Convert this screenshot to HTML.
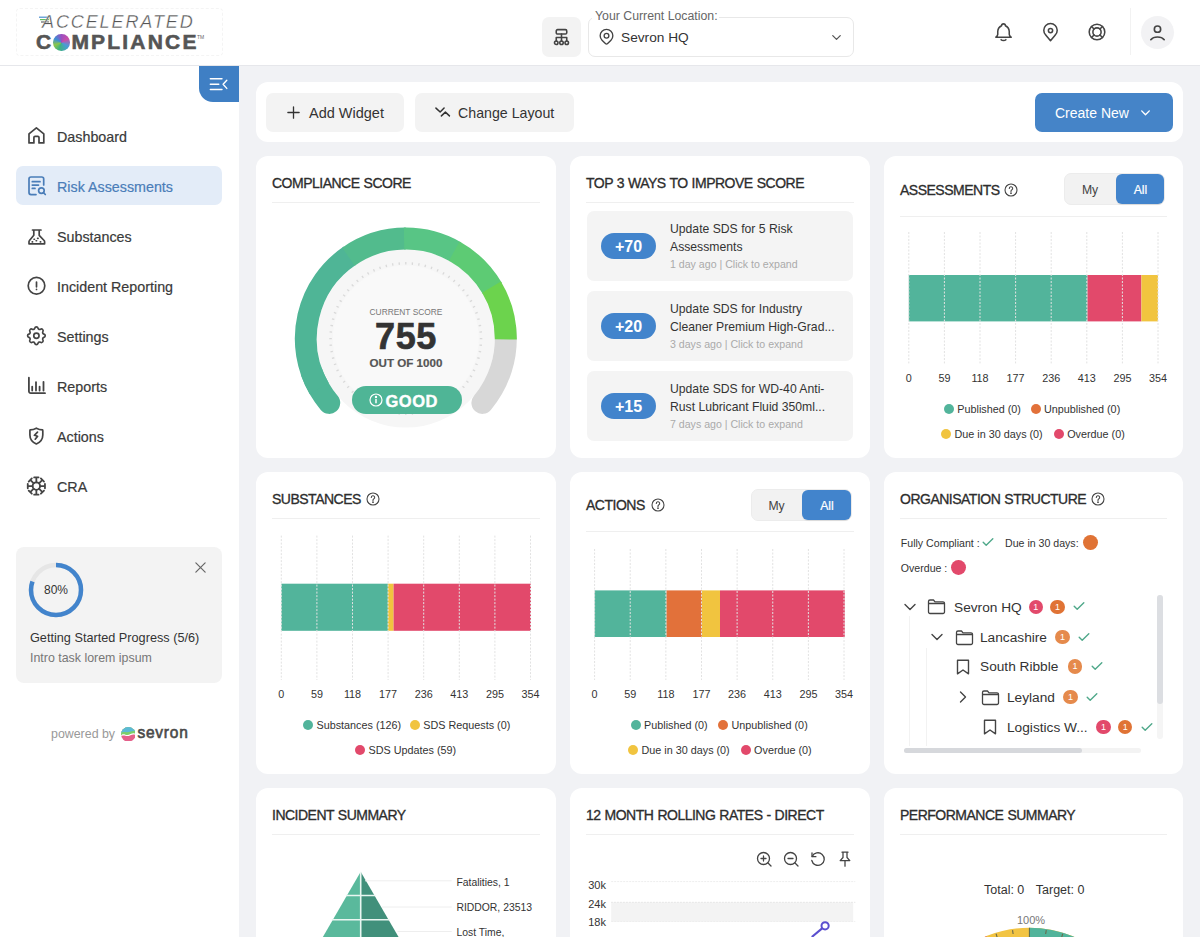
<!DOCTYPE html>
<html><head><meta charset="utf-8">
<style>
*{box-sizing:border-box;margin:0;padding:0}
html,body{width:1200px;height:937px;overflow:hidden;background:#f1f2f5;font-family:"Liberation Sans",sans-serif;color:#333}
.abs{position:absolute}
#header{position:absolute;left:0;top:0;width:1200px;height:66px;background:#fff;border-bottom:1px solid #e6e7eb}
#sidebar{position:absolute;left:0;top:66px;width:239px;height:871px;background:#fff}
.nav{position:absolute;left:16px;width:206px;height:39px;border-radius:7px}
.nav .t{position:absolute;left:41px;top:2px;line-height:39px;font-size:14.3px;color:#3a3a3a;white-space:nowrap;-webkit-text-stroke:0.2px #3a3a3a}
.nav svg{position:absolute;left:10px;top:8px}
.nav.active{background:#e3ecf8}
.nav.active .t{color:#4a7db8;-webkit-text-stroke:0.2px #4a7db8}
.card{position:absolute;background:#fff;border-radius:12px;overflow:hidden}
.ttl{position:absolute;left:16px;font-size:14px;font-weight:normal;-webkit-text-stroke:0.32px #2d2d2d;color:#2d2d2d;white-space:nowrap;letter-spacing:-0.5px;word-spacing:0.6px;line-height:17px}
.div{position:absolute;left:16px;right:16px;height:1px;background:#efefef}
.btn{position:absolute;background:#f3f3f3;border-radius:7px}
.small{font-size:11px;color:#333;white-space:nowrap}
</style></head>
<body>
<div id="header">
  <div class="abs" style="left:16px;top:8px;width:207px;height:48px;border:1px dashed #f4f4f4;border-radius:4px"></div>
  <svg class="abs" style="left:38px;top:15px" width="18" height="12" viewBox="0 0 18 12">
    <path d="M1 2.2h10" stroke="#4a8fd0" stroke-width="1.2"/>
    <path d="M2 4.6h9" stroke="#63bf5a" stroke-width="1.2"/>
    <path d="M3 7h8" stroke="#666" stroke-width="1.2"/>
  </svg>
  <div class="abs" style="left:42px;top:12px;font-size:18px;font-style:italic;color:#555;letter-spacing:1.9px;line-height:20px;-webkit-text-stroke:0.35px #fff">ACCELERATED</div>
  <div class="abs" style="left:36px;top:31px;font-size:21px;font-weight:bold;color:#555;letter-spacing:2.2px;line-height:22px;-webkit-text-stroke:0.6px #555">C<span style="display:inline-block;width:16.5px;height:16.5px;margin:0 1.5px 0 0;vertical-align:-1.5px;border-radius:50%;background:conic-gradient(from 0deg,#9b4fc0,#c94fa8 60deg,#4a9bd8 120deg,#3fb27e 200deg,#8cc64a 250deg,#3c8fd6 300deg,#9b4fc0)"></span>MPLIANCE</div>
  <div class="abs" style="left:197px;top:34px;font-size:5px;line-height:6px;color:#666">TM</div>
  <!-- org icon btn -->
  <div class="abs" style="left:542px;top:17px;width:39px;height:40px;background:#f3f3f3;border-radius:7px"></div>
  <svg class="abs" style="left:551px;top:27px" width="21" height="21" viewBox="0 0 24 24" fill="none" stroke="#444" stroke-width="1.8" stroke-linecap="round" stroke-linejoin="round">
    <rect x="6" y="3" width="12" height="5" rx="1.5"/>
    <path d="M12 8v4M6 12h12M6 12v4M12 12v4M18 12v4"/>
    <circle cx="6" cy="18" r="2"/><circle cx="12" cy="18" r="2"/><circle cx="18" cy="18" r="2"/>
  </svg>
  <!-- location select -->
  <div class="abs" style="left:588px;top:17px;width:266px;height:40px;border:1px solid #e8e8e8;border-radius:7px"></div>
  <div class="abs" style="left:592px;top:9px;padding:0 1px 0 3px;background:#fff;font-size:12.3px;color:#666;line-height:14px">Your Current Location:</div>
  <svg class="abs" style="left:597px;top:27px" width="19" height="19" viewBox="0 0 24 24" fill="none" stroke="#444" stroke-width="1.7" stroke-linecap="round" stroke-linejoin="round">
    <circle cx="12" cy="11" r="3"/>
    <path d="M17.657 16.657L13.414 20.9a2 2 0 0 1-2.827 0l-4.244-4.243a8 8 0 1 1 11.314 0z"/>
  </svg>
  <div class="abs" style="left:621px;top:30px;font-size:13.7px;color:#333;line-height:16px">Sevron HQ</div>
  <svg class="abs" style="left:829px;top:30px" width="15" height="15" viewBox="0 0 24 24" fill="none" stroke="#555" stroke-width="2" stroke-linecap="round" stroke-linejoin="round"><path d="M6 9l6 6 6-6"/></svg>
  <!-- right icons -->
  <svg class="abs" style="left:992px;top:21px" width="23" height="23" viewBox="0 0 24 24" fill="none" stroke="#444" stroke-width="1.6" stroke-linecap="round" stroke-linejoin="round">
    <path d="M10 5a2 2 0 1 1 4 0a7 7 0 0 1 4 6v3a4 4 0 0 0 2 3h-16a4 4 0 0 0 2-3v-3a7 7 0 0 1 4-6"/><path d="M9.5 19.5a3 2 0 0 0 5 0"/>
  </svg>
  <svg class="abs" style="left:1039px;top:21px" width="23" height="23" viewBox="0 0 24 24" fill="none" stroke="#444" stroke-width="1.6" stroke-linecap="round" stroke-linejoin="round">
    <circle cx="12" cy="10" r="2.2"/>
    <path d="M12 20.5l-5-6a7 7 0 1 1 10 0z"/>
  </svg>
  <svg class="abs" style="left:1086px;top:21px" width="22" height="22" viewBox="0 0 24 24" fill="none" stroke="#444" stroke-width="1.7" stroke-linecap="round" stroke-linejoin="round">
    <circle cx="12" cy="12" r="8.5"/><circle cx="12" cy="12" r="4.5"/>
    <path d="M15.2 8.8l2.8-2.8M8.8 8.8L6 6M8.8 15.2L6 18M15.2 15.2l2.8 2.8"/>
  </svg>
  <div class="abs" style="left:1130px;top:8px;width:1px;height:47px;background:#f2f2f2"></div>
  <div class="abs" style="left:1141px;top:16px;width:33px;height:33px;border-radius:50%;background:#f2f2f4"></div>
  <svg class="abs" style="left:1146px;top:21px" width="23" height="23" viewBox="0 0 24 24" fill="none" stroke="#444" stroke-width="1.7" stroke-linecap="round" stroke-linejoin="round">
    <circle cx="12" cy="8.5" r="3.3"/><path d="M5 19.5a8 5.5 0 0 1 14 0"/>
  </svg>
</div>
<div id="sidebar">
  <div class="abs" style="left:199px;top:0;width:40px;height:36px;background:#3f7fc4;border-bottom-left-radius:14px"></div>
  <svg class="abs" style="left:209px;top:10px" width="20" height="16" viewBox="0 0 20 16" fill="none" stroke="#fff" stroke-width="1.4" stroke-linecap="round" stroke-linejoin="round">
    <path d="M1.3 2.8H13M1.3 8.2H9.8M1.3 13.5H13M17.8 4.2L14.1 8.2L17.8 12.4"/>
  </svg>
  <div class="nav" style="top:50px"><svg width="22" height="22" viewBox="0 0 22 22" fill="none" stroke="#444" stroke-width="1.7" stroke-linecap="round" stroke-linejoin="round"><path d="M3 18.9V9.9L10.4 3.8L17.8 9.9V18.9H13V13.5a1.2 1.2 0 0 0-1.2-1.2H9.1a1.2 1.2 0 0 0-1.2 1.2V18.9Z"/></svg><span class="t">Dashboard</span></div>
  <div class="nav active" style="top:100px"><svg width="22" height="22" viewBox="0 0 22 22" fill="none" stroke="#4a7db8" stroke-width="1.7" stroke-linecap="round" stroke-linejoin="round"><path d="M17.7 11V5a2 2 0 0 0-2-2H5a2 2 0 0 0-2 2v13.6a2 2 0 0 0 2 2h5M6.3 7.7h7.7M6.3 11.1h6.2M6.3 14.4h2.7"/><circle cx="15.4" cy="16.6" r="2.8"/><path d="M17.5 18.7l1.8 1.8"/></svg><span class="t">Risk Assessments</span></div>
  <div class="nav" style="top:150px"><svg width="22" height="22" viewBox="0 0 22 22" fill="none" stroke="#444" stroke-width="1.7" stroke-linecap="round" stroke-linejoin="round"><path d="M6.5 6H15M7.8 6v5.3L3.5 16.5a2 2 0 0 0-.5 1.3v2h15.6v-2a2 2 0 0 0-.5-1.3L13.2 11.3V6"/><path d="M8 15.3h.5M11.6 14.4h.5M10.1 16.8h.5M6.2 17.9h.4M14.3 17.9h.4" stroke-width="1.6"/></svg><span class="t">Substances</span></div>
  <div class="nav" style="top:200px"><svg width="22" height="22" viewBox="0 0 22 22" fill="none" stroke="#444" stroke-width="1.7" stroke-linecap="round" stroke-linejoin="round"><circle cx="10.5" cy="11.75" r="8.3"/><path d="M10.5 8v4.8M10.5 15.4h.01"/></svg><span class="t">Incident Reporting</span></div>
  <div class="nav" style="top:250px"><svg width="22" height="22" viewBox="0 0 22 22" fill="none" stroke="#444" stroke-width="1.7" stroke-linecap="round" stroke-linejoin="round"><g transform="translate(10.4 11.75) scale(0.98) translate(-12 -12)"><path d="M10.325 4.317c.426-1.756 2.924-1.756 3.35 0a1.724 1.724 0 0 0 2.573 1.066c1.543-.94 3.31.826 2.37 2.37a1.724 1.724 0 0 0 1.065 2.572c1.756.426 1.756 2.924 0 3.35a1.724 1.724 0 0 0-1.066 2.573c.94 1.543-.826 3.31-2.370 2.370a1.724 1.724 0 0 0-2.572 1.065c-.426 1.756-2.924 1.756-3.35 0a1.724 1.724 0 0 0-2.573-1.066c-1.543.94-3.31-.826-2.37-2.37a1.724 1.724 0 0 0-1.065-2.572c-1.756-.426-1.756-2.924 0-3.35a1.724 1.724 0 0 0 1.066-2.573c-.94-1.543.826-3.31 2.37-2.37c1 .608 2.296.07 2.572-1.065z"/><circle cx="12" cy="12" r="2.7"/></g></svg><span class="t">Settings</span></div>
  <div class="nav" style="top:300px"><svg width="22" height="22" viewBox="0 0 22 22" fill="none" stroke="#444" stroke-width="1.8" stroke-linecap="round" stroke-linejoin="round"><path d="M2.9 3.7V17.3a1.9 1.9 0 0 0 1.9 1.9H19M6.2 12.6v3.9M10 8.1v8.4M13.6 12.6v3.9M17.5 7.8v8.7"/></svg><span class="t">Reports</span></div>
  <div class="nav" style="top:350px"><svg width="22" height="22" viewBox="0 0 22 22" fill="none" stroke="#444" stroke-width="1.7" stroke-linecap="round" stroke-linejoin="round"><path d="M10.35 4.2C8.5 5.2 6.2 5.8 4.1 5.8 3.9 6 3.9 6.4 3.9 6.8V11c0 3.9 2.6 7.3 6.45 9C14.2 18.3 16.8 14.9 16.8 11V6.8c0-.4 0-.8-.2-1-2.1 0-4.4-.6-6.25-1.6z"/><path d="M11.5 8.2L8.4 11.3 11.6 12.2 9.2 15.2"/></svg><span class="t">Actions</span></div>
  <div class="nav" style="top:400px"><svg width="22" height="22" viewBox="0 0 22 22" fill="none" stroke="#444" stroke-width="1.8" stroke-linecap="round" stroke-linejoin="round"><circle cx="10.35" cy="12.05" r="3.75"/><path d="M10.35 8.30L10.35 3.45M8.15 3.45L12.55 3.45M13.00 9.40L16.43 5.97M14.88 4.41L17.99 7.52M14.10 12.05L18.95 12.05M18.95 9.85L18.95 14.25M13.00 14.70L16.43 18.13M17.99 16.58L14.88 19.69M10.35 15.80L10.35 20.65M12.55 20.65L8.15 20.65M7.70 14.70L4.27 18.13M5.82 19.69L2.71 16.58M6.60 12.05L1.75 12.05M1.75 14.25L1.75 9.85M7.70 9.40L4.27 5.97M2.71 7.52L5.82 4.41"/></svg><span class="t">CRA</span></div>
  <div class="abs" style="left:16px;top:481px;width:206px;height:136px;background:#f3f3f3;border-radius:8px">
    <svg class="abs" style="left:12px;top:15px" width="56" height="56" viewBox="0 0 56 56">
      <circle cx="28" cy="28" r="25" fill="none" stroke="#e6e6e6" stroke-width="4.5"/>
      <circle cx="28" cy="28" r="25" fill="none" stroke="#4284cc" stroke-width="4.5" stroke-dasharray="125.66 157.08" transform="rotate(-90 28 28)"/>
    </svg>
    <div class="abs" style="left:28px;top:36px;width:24px;text-align:center;font-size:12px;color:#333;line-height:14px">80%</div>
    <svg class="abs" style="left:178px;top:14px" width="13" height="13" viewBox="0 0 14 14" fill="none" stroke="#666" stroke-width="1.3" stroke-linecap="round"><path d="M2 2l10 10M12 2L2 12"/></svg>
    <div class="abs" style="left:14px;top:84px;font-size:12.7px;color:#333;line-height:15px;white-space:nowrap">Getting Started Progress (5/6)</div>
    <div class="abs" style="left:14px;top:104px;font-size:12.4px;color:#777;line-height:15px;white-space:nowrap">Intro task lorem ipsum</div>
  </div>
  <div class="abs" style="left:51px;top:661px;font-size:12.4px;color:#999;line-height:15px">powered by</div>
  <svg class="abs" style="left:120.8px;top:660.5px" width="14.6" height="14.6" viewBox="0 0 20 20">
    <defs><clipPath id="sc"><circle cx="10" cy="10" r="10"/></clipPath></defs>
    <g clip-path="url(#sc)">
      <rect x="0" y="0" width="20" height="20" fill="#e4608a"/>
      <path d="M0 0H20V11C15 8 12 14 6 12C3 11 1 12 0 13z" fill="#ffffff"/>
      <path d="M0 0H20V9.5C15 6.5 12 12.5 6 10.5C3 9.5 1 10.5 0 11.5z" fill="#7ccf6a"/>
      <path d="M0 0H20V6C15 4 11 8 6 7C3 6.5 1 7 0 8z" fill="#5bbad6"/>
    </g>
  </svg>
  <div class="abs" style="left:137.5px;top:657px;font-size:15.5px;font-weight:normal;-webkit-text-stroke:0.6px #4a4a4a;color:#4a4a4a;line-height:19px;letter-spacing:0.75px;transform:scaleY(1.1);transform-origin:0 70%">sevron</div>

</div><div class="card" style="left:256px;top:82px;width:927px;height:60px">
  <div class="btn" style="left:10px;top:11px;width:138px;height:39px"></div>
  <svg class="abs" style="left:30px;top:23px" width="15" height="15" viewBox="0 0 16 16" fill="none" stroke="#333" stroke-width="1.4" stroke-linecap="round"><path d="M8 2v12M2 8h12"/></svg>
  <div class="abs" style="left:53px;top:23px;font-size:14.5px;color:#333;line-height:17px">Add Widget</div>
  <div class="btn" style="left:159px;top:11px;width:159px;height:39px"></div>
  <svg class="abs" style="left:178px;top:23px" width="17" height="15" viewBox="0 0 18 16" fill="none" stroke="#333" stroke-width="1.6" stroke-linecap="round" stroke-linejoin="round"><path d="M2 3.3L6.5 7.5L10.7 3.3M7.8 11.6L12.1 7.6L16.4 11.6"/></svg>
  <div class="abs" style="left:202px;top:23px;font-size:14.2px;color:#333;line-height:17px">Change Layout</div>
  <div class="abs" style="left:779px;top:11px;width:138px;height:39px;background:#4584c8;border-radius:7px"></div>
  <div class="abs" style="left:799px;top:23px;font-size:14px;color:#fff;line-height:17px">Create New</div>
  <svg class="abs" style="left:883px;top:24px" width="13" height="13" viewBox="0 0 24 24" fill="none" stroke="#fff" stroke-width="2.6" stroke-linecap="round" stroke-linejoin="round"><path d="M5 9l7 7 7-7"/></svg>
</div>
<div class="card" style="left:256px;top:156px;width:300px;height:302px">
<div class="ttl" style="top:19px">COMPLIANCE SCORE</div><div class="div" style="top:46px"></div>
<svg class="abs" style="left:0;top:0" width="300" height="302">
<circle cx="149.8" cy="182.6" r="89" fill="#f6f6f6"/>
<circle cx="149.8" cy="182.6" r="73" fill="#f9f9f9"/>
<path d="M249.42 173.88A100 100 0 0 1 226.40 246.88" stroke="#d7d7d7" stroke-width="22" fill="none" stroke-linecap="round"/>
<path d="M73.20 246.88A100 100 0 0 1 55.83 216.80" stroke="#4fb596" stroke-width="22" fill="none" stroke-linecap="round"/>
<path d="M63.20 232.60A100 100 0 0 1 93.88 99.70" stroke="#4fb596" stroke-width="22" fill="none" stroke-linecap="butt"/>
<path d="M92.44 100.68A100 100 0 0 1 149.80 82.60" stroke="#52bb8d" stroke-width="22" fill="none" stroke-linecap="butt"/>
<path d="M148.05 82.62A100 100 0 0 1 199.80 96.00" stroke="#58c585" stroke-width="22" fill="none" stroke-linecap="butt"/>
<path d="M198.28 95.14A100 100 0 0 1 236.40 132.60" stroke="#5dcb74" stroke-width="22" fill="none" stroke-linecap="butt"/>
<path d="M235.52 131.10A100 100 0 0 1 249.80 183.47" stroke="#6cd34d" stroke-width="22" fill="none" stroke-linecap="butt"/>
<line x1="226.30" y1="182.60" x2="223.80" y2="182.60" stroke="#d9d9d9" stroke-width="1.3"/>
<line x1="226.01" y1="189.27" x2="223.52" y2="189.05" stroke="#d9d9d9" stroke-width="1.3"/>
<line x1="225.14" y1="195.88" x2="222.68" y2="195.45" stroke="#d9d9d9" stroke-width="1.3"/>
<line x1="223.69" y1="202.40" x2="221.28" y2="201.75" stroke="#d9d9d9" stroke-width="1.3"/>
<line x1="221.69" y1="208.76" x2="219.34" y2="207.91" stroke="#d9d9d9" stroke-width="1.3"/>
<line x1="219.13" y1="214.93" x2="216.87" y2="213.87" stroke="#d9d9d9" stroke-width="1.3"/>
<line x1="216.05" y1="220.85" x2="213.89" y2="219.60" stroke="#d9d9d9" stroke-width="1.3"/>
<line x1="212.47" y1="226.48" x2="210.42" y2="225.04" stroke="#d9d9d9" stroke-width="1.3"/>
<line x1="208.40" y1="231.77" x2="206.49" y2="230.17" stroke="#d9d9d9" stroke-width="1.3"/>
<line x1="203.89" y1="236.69" x2="202.13" y2="234.93" stroke="#d9d9d9" stroke-width="1.3"/>
<line x1="198.97" y1="241.20" x2="197.37" y2="239.29" stroke="#d9d9d9" stroke-width="1.3"/>
<line x1="193.68" y1="245.27" x2="192.24" y2="243.22" stroke="#d9d9d9" stroke-width="1.3"/>
<line x1="188.05" y1="248.85" x2="186.80" y2="246.69" stroke="#d9d9d9" stroke-width="1.3"/>
<line x1="182.13" y1="251.93" x2="181.07" y2="249.67" stroke="#d9d9d9" stroke-width="1.3"/>
<line x1="175.96" y1="254.49" x2="175.11" y2="252.14" stroke="#d9d9d9" stroke-width="1.3"/>
<line x1="169.60" y1="256.49" x2="168.95" y2="254.08" stroke="#d9d9d9" stroke-width="1.3"/>
<line x1="163.08" y1="257.94" x2="162.65" y2="255.48" stroke="#d9d9d9" stroke-width="1.3"/>
<line x1="156.47" y1="258.81" x2="156.25" y2="256.32" stroke="#d9d9d9" stroke-width="1.3"/>
<line x1="149.80" y1="259.10" x2="149.80" y2="256.60" stroke="#d9d9d9" stroke-width="1.3"/>
<line x1="143.13" y1="258.81" x2="143.35" y2="256.32" stroke="#d9d9d9" stroke-width="1.3"/>
<line x1="136.52" y1="257.94" x2="136.95" y2="255.48" stroke="#d9d9d9" stroke-width="1.3"/>
<line x1="130.00" y1="256.49" x2="130.65" y2="254.08" stroke="#d9d9d9" stroke-width="1.3"/>
<line x1="123.64" y1="254.49" x2="124.49" y2="252.14" stroke="#d9d9d9" stroke-width="1.3"/>
<line x1="117.47" y1="251.93" x2="118.53" y2="249.67" stroke="#d9d9d9" stroke-width="1.3"/>
<line x1="111.55" y1="248.85" x2="112.80" y2="246.69" stroke="#d9d9d9" stroke-width="1.3"/>
<line x1="105.92" y1="245.27" x2="107.36" y2="243.22" stroke="#d9d9d9" stroke-width="1.3"/>
<line x1="100.63" y1="241.20" x2="102.23" y2="239.29" stroke="#d9d9d9" stroke-width="1.3"/>
<line x1="95.71" y1="236.69" x2="97.47" y2="234.93" stroke="#d9d9d9" stroke-width="1.3"/>
<line x1="91.20" y1="231.77" x2="93.11" y2="230.17" stroke="#d9d9d9" stroke-width="1.3"/>
<line x1="87.13" y1="226.48" x2="89.18" y2="225.04" stroke="#d9d9d9" stroke-width="1.3"/>
<line x1="83.55" y1="220.85" x2="85.71" y2="219.60" stroke="#d9d9d9" stroke-width="1.3"/>
<line x1="80.47" y1="214.93" x2="82.73" y2="213.87" stroke="#d9d9d9" stroke-width="1.3"/>
<line x1="77.91" y1="208.76" x2="80.26" y2="207.91" stroke="#d9d9d9" stroke-width="1.3"/>
<line x1="75.91" y1="202.40" x2="78.32" y2="201.75" stroke="#d9d9d9" stroke-width="1.3"/>
<line x1="74.46" y1="195.88" x2="76.92" y2="195.45" stroke="#d9d9d9" stroke-width="1.3"/>
<line x1="73.59" y1="189.27" x2="76.08" y2="189.05" stroke="#d9d9d9" stroke-width="1.3"/>
<line x1="73.30" y1="182.60" x2="75.80" y2="182.60" stroke="#d9d9d9" stroke-width="1.3"/>
<line x1="73.59" y1="175.93" x2="76.08" y2="176.15" stroke="#d9d9d9" stroke-width="1.3"/>
<line x1="74.46" y1="169.32" x2="76.92" y2="169.75" stroke="#d9d9d9" stroke-width="1.3"/>
<line x1="75.91" y1="162.80" x2="78.32" y2="163.45" stroke="#d9d9d9" stroke-width="1.3"/>
<line x1="77.91" y1="156.44" x2="80.26" y2="157.29" stroke="#d9d9d9" stroke-width="1.3"/>
<line x1="80.47" y1="150.27" x2="82.73" y2="151.33" stroke="#d9d9d9" stroke-width="1.3"/>
<line x1="83.55" y1="144.35" x2="85.71" y2="145.60" stroke="#d9d9d9" stroke-width="1.3"/>
<line x1="87.13" y1="138.72" x2="89.18" y2="140.16" stroke="#d9d9d9" stroke-width="1.3"/>
<line x1="91.20" y1="133.43" x2="93.11" y2="135.03" stroke="#d9d9d9" stroke-width="1.3"/>
<line x1="95.71" y1="128.51" x2="97.47" y2="130.27" stroke="#d9d9d9" stroke-width="1.3"/>
<line x1="100.63" y1="124.00" x2="102.23" y2="125.91" stroke="#d9d9d9" stroke-width="1.3"/>
<line x1="105.92" y1="119.93" x2="107.36" y2="121.98" stroke="#d9d9d9" stroke-width="1.3"/>
<line x1="111.55" y1="116.35" x2="112.80" y2="118.51" stroke="#d9d9d9" stroke-width="1.3"/>
<line x1="117.47" y1="113.27" x2="118.53" y2="115.53" stroke="#d9d9d9" stroke-width="1.3"/>
<line x1="123.64" y1="110.71" x2="124.49" y2="113.06" stroke="#d9d9d9" stroke-width="1.3"/>
<line x1="130.00" y1="108.71" x2="130.65" y2="111.12" stroke="#d9d9d9" stroke-width="1.3"/>
<line x1="136.52" y1="107.26" x2="136.95" y2="109.72" stroke="#d9d9d9" stroke-width="1.3"/>
<line x1="143.13" y1="106.39" x2="143.35" y2="108.88" stroke="#d9d9d9" stroke-width="1.3"/>
<line x1="149.80" y1="106.10" x2="149.80" y2="108.60" stroke="#d9d9d9" stroke-width="1.3"/>
<line x1="156.47" y1="106.39" x2="156.25" y2="108.88" stroke="#d9d9d9" stroke-width="1.3"/>
<line x1="163.08" y1="107.26" x2="162.65" y2="109.72" stroke="#d9d9d9" stroke-width="1.3"/>
<line x1="169.60" y1="108.71" x2="168.95" y2="111.12" stroke="#d9d9d9" stroke-width="1.3"/>
<line x1="175.96" y1="110.71" x2="175.11" y2="113.06" stroke="#d9d9d9" stroke-width="1.3"/>
<line x1="182.13" y1="113.27" x2="181.07" y2="115.53" stroke="#d9d9d9" stroke-width="1.3"/>
<line x1="188.05" y1="116.35" x2="186.80" y2="118.51" stroke="#d9d9d9" stroke-width="1.3"/>
<line x1="193.68" y1="119.93" x2="192.24" y2="121.98" stroke="#d9d9d9" stroke-width="1.3"/>
<line x1="198.97" y1="124.00" x2="197.37" y2="125.91" stroke="#d9d9d9" stroke-width="1.3"/>
<line x1="203.89" y1="128.51" x2="202.13" y2="130.27" stroke="#d9d9d9" stroke-width="1.3"/>
<line x1="208.40" y1="133.43" x2="206.49" y2="135.03" stroke="#d9d9d9" stroke-width="1.3"/>
<line x1="212.47" y1="138.72" x2="210.42" y2="140.16" stroke="#d9d9d9" stroke-width="1.3"/>
<line x1="216.05" y1="144.35" x2="213.89" y2="145.60" stroke="#d9d9d9" stroke-width="1.3"/>
<line x1="219.13" y1="150.27" x2="216.87" y2="151.33" stroke="#d9d9d9" stroke-width="1.3"/>
<line x1="221.69" y1="156.44" x2="219.34" y2="157.29" stroke="#d9d9d9" stroke-width="1.3"/>
<line x1="223.69" y1="162.80" x2="221.28" y2="163.45" stroke="#d9d9d9" stroke-width="1.3"/>
<line x1="225.14" y1="169.32" x2="222.68" y2="169.75" stroke="#d9d9d9" stroke-width="1.3"/>
<line x1="226.01" y1="175.93" x2="223.52" y2="176.15" stroke="#d9d9d9" stroke-width="1.3"/>
</svg>

<div class="abs" style="left:100px;top:151px;width:100px;text-align:center;font-size:8.4px;line-height:10px;color:#777">CURRENT SCORE</div>
<div class="abs" style="left:90px;top:163px;width:120px;text-align:center;font-size:36px;font-weight:bold;line-height:36px;color:#333;letter-spacing:0.6px;-webkit-text-stroke:0.7px #333">755</div>
<div class="abs" style="left:90px;top:200px;width:120px;text-align:center;font-size:11.6px;font-weight:bold;line-height:14px;color:#555;-webkit-text-stroke:0.2px #555">OUT OF 1000</div>
<div class="abs" style="left:96px;top:230px;width:110px;height:28px;border-radius:14px;background:#4fb596"></div>
<svg class="abs" style="left:113px;top:237px" width="14" height="14" viewBox="0 0 14 14" fill="none" stroke="#fff" stroke-width="1.2"><circle cx="7" cy="7" r="6"/><path d="M7 6v4.2" stroke-width="1.5"/><circle cx="7" cy="4" r="0.6" fill="#fff"/></svg>
<div class="abs" style="left:129.5px;top:236px;font-size:16.5px;font-weight:bold;line-height:18px;color:#fff;letter-spacing:0.5px;-webkit-text-stroke:0.4px #fff">GOOD</div>
</div>
<div class="card" style="left:570px;top:156px;width:300px;height:302px">
<div class="ttl" style="top:19px">TOP 3 WAYS TO IMPROVE SCORE</div><div class="div" style="top:46px"></div>
<div class="abs" style="left:17px;top:55px;width:266px;height:70px;background:#f4f4f4;border-radius:7px"><div class="abs" style="left:14px;top:22px;width:55px;height:26px;border-radius:13px;background:#4284cc;color:#fff;font-weight:bold;font-size:16px;line-height:28.5px;text-align:center">+70</div><div class="abs" style="left:83px;top:9px;font-size:12.2px;line-height:18.3px;color:#333;white-space:nowrap">Update SDS for 5 Risk<br>Assessments</div><div class="abs" style="left:83px;top:46px;font-size:10.6px;line-height:14px;color:#aaa;white-space:nowrap">1 day ago | Click to expand</div></div>
<div class="abs" style="left:17px;top:135px;width:266px;height:70px;background:#f4f4f4;border-radius:7px"><div class="abs" style="left:14px;top:22px;width:55px;height:26px;border-radius:13px;background:#4284cc;color:#fff;font-weight:bold;font-size:16px;line-height:28.5px;text-align:center">+20</div><div class="abs" style="left:83px;top:9px;font-size:12.2px;line-height:18.3px;color:#333;white-space:nowrap">Update SDS for Industry<br>Cleaner Premium High-Grad...</div><div class="abs" style="left:83px;top:46px;font-size:10.6px;line-height:14px;color:#aaa;white-space:nowrap">3 days ago | Click to expand</div></div>
<div class="abs" style="left:17px;top:215px;width:266px;height:70px;background:#f4f4f4;border-radius:7px"><div class="abs" style="left:14px;top:22px;width:55px;height:26px;border-radius:13px;background:#4284cc;color:#fff;font-weight:bold;font-size:16px;line-height:28.5px;text-align:center">+15</div><div class="abs" style="left:83px;top:9px;font-size:12.2px;line-height:18.3px;color:#333;white-space:nowrap">Update SDS for WD-40 Anti-<br>Rust Lubricant Fluid 350ml...</div><div class="abs" style="left:83px;top:46px;font-size:10.6px;line-height:14px;color:#aaa;white-space:nowrap">7 days ago | Click to expand</div></div>
</div>
<div class="card" style="left:884px;top:156px;width:299px;height:302px">
<div class="ttl" style="top:26px">ASSESSMENTS</div><svg class="abs" style="left:120px;top:27px" width="14" height="14" viewBox="0 0 14 14" fill="none" stroke="#444" stroke-width="1.1" stroke-linecap="round"><circle cx="7" cy="7" r="6"/><path d="M5.3 5.5a1.7 1.7 0 1 1 2.4 1.5c-.5.25-.7.6-.7 1.1v.3"/><circle cx="7" cy="10.2" r="0.35" fill="#444"/></svg><div class="div" style="top:60px"></div>
<div class="abs" style="left:180px;top:17px;width:101px;height:32px;background:#f2f2f2;border-radius:7px;border:1px solid #ececec"></div><div class="abs" style="left:232px;top:18px;width:48px;height:30px;background:#4284cc;border-radius:6px;box-shadow:0 1px 1px rgba(0,0,0,0.08)"></div><div class="abs" style="left:180px;top:17px;width:52px;height:32px;line-height:34px;text-align:center;font-size:12.2px;color:#444">My</div><div class="abs" style="left:232px;top:17px;width:49px;height:32px;line-height:34px;text-align:center;font-size:12.2px;color:#fff;-webkit-text-stroke:0.2px #fff">All</div>
<svg class="abs" style="left:0;top:0" width="300" height="302"><rect x="24.80" y="119" width="178.70" height="46.400000000000006" fill="#52b49b"/><rect x="203.50" y="119" width="53.90" height="46.400000000000006" fill="#e2496b"/><rect x="257.40" y="119" width="16.60" height="46.400000000000006" fill="#f1c43f"/><line x1="24.80" y1="76" x2="24.80" y2="207.4" stroke="#e2e2e2" stroke-width="1" stroke-dasharray="2 1.5"/><line x1="60.40" y1="76" x2="60.40" y2="207.4" stroke="#e2e2e2" stroke-width="1" stroke-dasharray="2 1.5"/><line x1="96.00" y1="76" x2="96.00" y2="207.4" stroke="#e2e2e2" stroke-width="1" stroke-dasharray="2 1.5"/><line x1="131.60" y1="76" x2="131.60" y2="207.4" stroke="#e2e2e2" stroke-width="1" stroke-dasharray="2 1.5"/><line x1="167.20" y1="76" x2="167.20" y2="207.4" stroke="#e2e2e2" stroke-width="1" stroke-dasharray="2 1.5"/><line x1="202.80" y1="76" x2="202.80" y2="207.4" stroke="#e2e2e2" stroke-width="1" stroke-dasharray="2 1.5"/><line x1="238.40" y1="76" x2="238.40" y2="207.4" stroke="#e2e2e2" stroke-width="1" stroke-dasharray="2 1.5"/><line x1="274.00" y1="76" x2="274.00" y2="207.4" stroke="#e2e2e2" stroke-width="1" stroke-dasharray="2 1.5"/></svg><div class="abs" style="left:4.8px;top:215.3px;width:40px;text-align:center;font-size:10.8px;line-height:14px;color:#333">0</div><div class="abs" style="left:40.4px;top:215.3px;width:40px;text-align:center;font-size:10.8px;line-height:14px;color:#333">59</div><div class="abs" style="left:76.0px;top:215.3px;width:40px;text-align:center;font-size:10.8px;line-height:14px;color:#333">118</div><div class="abs" style="left:111.6px;top:215.3px;width:40px;text-align:center;font-size:10.8px;line-height:14px;color:#333">177</div><div class="abs" style="left:147.2px;top:215.3px;width:40px;text-align:center;font-size:10.8px;line-height:14px;color:#333">236</div><div class="abs" style="left:182.8px;top:215.3px;width:40px;text-align:center;font-size:10.8px;line-height:14px;color:#333">413</div><div class="abs" style="left:218.4px;top:215.3px;width:40px;text-align:center;font-size:10.8px;line-height:14px;color:#333">295</div><div class="abs" style="left:254.0px;top:215.3px;width:40px;text-align:center;font-size:10.8px;line-height:14px;color:#333">354</div>
<div class="abs" style="left:59.8px;top:248px;width:10px;height:10px;border-radius:50%;background:#52b49b"></div><div class="abs" style="left:73.3px;top:246px;font-size:10.8px;line-height:14px;color:#333;white-space:nowrap">Published (0)</div><div class="abs" style="left:146.5px;top:248px;width:10px;height:10px;border-radius:50%;background:#e2713a"></div><div class="abs" style="left:160.0px;top:246px;font-size:10.8px;line-height:14px;color:#333;white-space:nowrap">Unpublished (0)</div>
<div class="abs" style="left:57px;top:273px;width:10px;height:10px;border-radius:50%;background:#f1c43f"></div><div class="abs" style="left:70.5px;top:271px;font-size:10.8px;line-height:14px;color:#333;white-space:nowrap">Due in 30 days (0)</div><div class="abs" style="left:169.7px;top:273px;width:10px;height:10px;border-radius:50%;background:#e2496b"></div><div class="abs" style="left:183.2px;top:271px;font-size:10.8px;line-height:14px;color:#333;white-space:nowrap">Overdue (0)</div>
</div>
<div class="card" style="left:256px;top:472px;width:300px;height:302px">
<div class="ttl" style="top:19px">SUBSTANCES</div><svg class="abs" style="left:110px;top:20px" width="14" height="14" viewBox="0 0 14 14" fill="none" stroke="#444" stroke-width="1.1" stroke-linecap="round"><circle cx="7" cy="7" r="6"/><path d="M5.3 5.5a1.7 1.7 0 1 1 2.4 1.5c-.5.25-.7.6-.7 1.1v.3"/><circle cx="7" cy="10.2" r="0.35" fill="#444"/></svg><div class="div" style="top:46px"></div>
<svg class="abs" style="left:0;top:0" width="300" height="302"><rect x="25.30" y="111.7" width="106.60" height="47.10000000000001" fill="#52b49b"/><rect x="131.90" y="111.7" width="5.70" height="47.10000000000001" fill="#f1c43f"/><rect x="137.60" y="111.7" width="137.40" height="47.10000000000001" fill="#e2496b"/><line x1="25.30" y1="63.6" x2="25.30" y2="208" stroke="#e2e2e2" stroke-width="1" stroke-dasharray="2 1.5"/><line x1="60.90" y1="63.6" x2="60.90" y2="208" stroke="#e2e2e2" stroke-width="1" stroke-dasharray="2 1.5"/><line x1="96.50" y1="63.6" x2="96.50" y2="208" stroke="#e2e2e2" stroke-width="1" stroke-dasharray="2 1.5"/><line x1="132.10" y1="63.6" x2="132.10" y2="208" stroke="#e2e2e2" stroke-width="1" stroke-dasharray="2 1.5"/><line x1="167.70" y1="63.6" x2="167.70" y2="208" stroke="#e2e2e2" stroke-width="1" stroke-dasharray="2 1.5"/><line x1="203.30" y1="63.6" x2="203.30" y2="208" stroke="#e2e2e2" stroke-width="1" stroke-dasharray="2 1.5"/><line x1="238.90" y1="63.6" x2="238.90" y2="208" stroke="#e2e2e2" stroke-width="1" stroke-dasharray="2 1.5"/><line x1="274.50" y1="63.6" x2="274.50" y2="208" stroke="#e2e2e2" stroke-width="1" stroke-dasharray="2 1.5"/></svg><div class="abs" style="left:5.3px;top:214.6px;width:40px;text-align:center;font-size:10.8px;line-height:14px;color:#333">0</div><div class="abs" style="left:40.9px;top:214.6px;width:40px;text-align:center;font-size:10.8px;line-height:14px;color:#333">59</div><div class="abs" style="left:76.5px;top:214.6px;width:40px;text-align:center;font-size:10.8px;line-height:14px;color:#333">118</div><div class="abs" style="left:112.1px;top:214.6px;width:40px;text-align:center;font-size:10.8px;line-height:14px;color:#333">177</div><div class="abs" style="left:147.7px;top:214.6px;width:40px;text-align:center;font-size:10.8px;line-height:14px;color:#333">236</div><div class="abs" style="left:183.3px;top:214.6px;width:40px;text-align:center;font-size:10.8px;line-height:14px;color:#333">413</div><div class="abs" style="left:218.9px;top:214.6px;width:40px;text-align:center;font-size:10.8px;line-height:14px;color:#333">295</div><div class="abs" style="left:254.5px;top:214.6px;width:40px;text-align:center;font-size:10.8px;line-height:14px;color:#333">354</div>
<div class="abs" style="left:47px;top:248px;width:10px;height:10px;border-radius:50%;background:#52b49b"></div><div class="abs" style="left:60.5px;top:246px;font-size:10.8px;line-height:14px;color:#333;white-space:nowrap">Substances (126)</div><div class="abs" style="left:153.8px;top:248px;width:10px;height:10px;border-radius:50%;background:#f1c43f"></div><div class="abs" style="left:167.3px;top:246px;font-size:10.8px;line-height:14px;color:#333;white-space:nowrap">SDS Requests (0)</div>
<div class="abs" style="left:99px;top:273px;width:10px;height:10px;border-radius:50%;background:#e2496b"></div><div class="abs" style="left:112.5px;top:271px;font-size:10.8px;line-height:14px;color:#333;white-space:nowrap">SDS Updates (59)</div>
</div>
<div class="card" style="left:570px;top:472px;width:300px;height:302px">
<div class="ttl" style="top:25px">ACTIONS</div><svg class="abs" style="left:81px;top:26px" width="14" height="14" viewBox="0 0 14 14" fill="none" stroke="#444" stroke-width="1.1" stroke-linecap="round"><circle cx="7" cy="7" r="6"/><path d="M5.3 5.5a1.7 1.7 0 1 1 2.4 1.5c-.5.25-.7.6-.7 1.1v.3"/><circle cx="7" cy="10.2" r="0.35" fill="#444"/></svg><div class="div" style="top:59px"></div>
<div class="abs" style="left:181px;top:17px;width:101px;height:32px;background:#f2f2f2;border-radius:7px;border:1px solid #ececec"></div><div class="abs" style="left:232px;top:18px;width:49px;height:30px;background:#4284cc;border-radius:6px;box-shadow:0 1px 1px rgba(0,0,0,0.08)"></div><div class="abs" style="left:181px;top:17px;width:51px;height:32px;line-height:34px;text-align:center;font-size:12.2px;color:#444">My</div><div class="abs" style="left:232px;top:17px;width:50px;height:32px;line-height:34px;text-align:center;font-size:12.2px;color:#fff;-webkit-text-stroke:0.2px #fff">All</div>
<svg class="abs" style="left:0;top:0" width="300" height="302"><rect x="24.60" y="118.4" width="71.90" height="46.599999999999994" fill="#52b49b"/><rect x="96.50" y="118.4" width="35.40" height="46.599999999999994" fill="#e2713a"/><rect x="131.90" y="118.4" width="18.10" height="46.599999999999994" fill="#f1c43f"/><rect x="150.00" y="118.4" width="124.80" height="46.599999999999994" fill="#e2496b"/><line x1="24.60" y1="77" x2="24.60" y2="208" stroke="#e2e2e2" stroke-width="1" stroke-dasharray="2 1.5"/><line x1="60.23" y1="77" x2="60.23" y2="208" stroke="#e2e2e2" stroke-width="1" stroke-dasharray="2 1.5"/><line x1="95.86" y1="77" x2="95.86" y2="208" stroke="#e2e2e2" stroke-width="1" stroke-dasharray="2 1.5"/><line x1="131.49" y1="77" x2="131.49" y2="208" stroke="#e2e2e2" stroke-width="1" stroke-dasharray="2 1.5"/><line x1="167.12" y1="77" x2="167.12" y2="208" stroke="#e2e2e2" stroke-width="1" stroke-dasharray="2 1.5"/><line x1="202.75" y1="77" x2="202.75" y2="208" stroke="#e2e2e2" stroke-width="1" stroke-dasharray="2 1.5"/><line x1="238.38" y1="77" x2="238.38" y2="208" stroke="#e2e2e2" stroke-width="1" stroke-dasharray="2 1.5"/><line x1="274.01" y1="77" x2="274.01" y2="208" stroke="#e2e2e2" stroke-width="1" stroke-dasharray="2 1.5"/></svg><div class="abs" style="left:4.6px;top:214.6px;width:40px;text-align:center;font-size:10.8px;line-height:14px;color:#333">0</div><div class="abs" style="left:40.2px;top:214.6px;width:40px;text-align:center;font-size:10.8px;line-height:14px;color:#333">59</div><div class="abs" style="left:75.9px;top:214.6px;width:40px;text-align:center;font-size:10.8px;line-height:14px;color:#333">118</div><div class="abs" style="left:111.5px;top:214.6px;width:40px;text-align:center;font-size:10.8px;line-height:14px;color:#333">177</div><div class="abs" style="left:147.1px;top:214.6px;width:40px;text-align:center;font-size:10.8px;line-height:14px;color:#333">236</div><div class="abs" style="left:182.8px;top:214.6px;width:40px;text-align:center;font-size:10.8px;line-height:14px;color:#333">413</div><div class="abs" style="left:218.4px;top:214.6px;width:40px;text-align:center;font-size:10.8px;line-height:14px;color:#333">295</div><div class="abs" style="left:254.0px;top:214.6px;width:40px;text-align:center;font-size:10.8px;line-height:14px;color:#333">354</div>
<div class="abs" style="left:60.599999999999994px;top:248px;width:10px;height:10px;border-radius:50%;background:#52b49b"></div><div class="abs" style="left:74.1px;top:246px;font-size:10.8px;line-height:14px;color:#333;white-space:nowrap">Published (0)</div><div class="abs" style="left:148px;top:248px;width:10px;height:10px;border-radius:50%;background:#e2713a"></div><div class="abs" style="left:161.5px;top:246px;font-size:10.8px;line-height:14px;color:#333;white-space:nowrap">Unpublished (0)</div>
<div class="abs" style="left:58px;top:273px;width:10px;height:10px;border-radius:50%;background:#f1c43f"></div><div class="abs" style="left:71.5px;top:271px;font-size:10.8px;line-height:14px;color:#333;white-space:nowrap">Due in 30 days (0)</div><div class="abs" style="left:170.6px;top:273px;width:10px;height:10px;border-radius:50%;background:#e2496b"></div><div class="abs" style="left:184.1px;top:271px;font-size:10.8px;line-height:14px;color:#333;white-space:nowrap">Overdue (0)</div>
</div>
<div class="card" style="left:884px;top:472px;width:299px;height:302px">
<div class="ttl" style="top:19px">ORGANISATION STRUCTURE</div><svg class="abs" style="left:206.5px;top:20px" width="14" height="14" viewBox="0 0 14 14" fill="none" stroke="#444" stroke-width="1.1" stroke-linecap="round"><circle cx="7" cy="7" r="6"/><path d="M5.3 5.5a1.7 1.7 0 1 1 2.4 1.5c-.5.25-.7.6-.7 1.1v.3"/><circle cx="7" cy="10.2" r="0.35" fill="#444"/></svg><div class="div" style="top:46px"></div>
<div class="abs" style="left:16.8px;top:63.7px;font-size:10.6px;line-height:14px;color:#333">Fully Compliant :</div><svg class="abs" style="left:98px;top:65.3px" width="12" height="10" viewBox="0 0 12 10" fill="none" stroke="#4fa88a" stroke-width="1.4" stroke-linecap="round" stroke-linejoin="round"><path d="M1.2 5.2l3 3L10.8 1.8"/></svg>
<div class="abs" style="left:121px;top:63.7px;font-size:10.6px;line-height:14px;color:#333">Due in 30 days:</div><div class="abs" style="left:199.4px;top:62.9px;width:14.8px;height:14.8px;border-radius:50%;background:#e07335"></div>
<div class="abs" style="left:16.8px;top:89px;font-size:10.6px;line-height:14px;color:#333">Overdue :</div><div class="abs" style="left:66.9px;top:88.2px;width:14.8px;height:14.8px;border-radius:50%;background:#e2496b"></div>
<div class="abs" style="left:25px;top:144px;width:1px;height:130px;background:#f2f2f2"></div>
<div class="abs" style="left:42px;top:176px;width:1px;height:98px;background:#f2f2f2"></div>
<svg class="abs" style="left:19.6px;top:130.8px" width="12" height="8" viewBox="0 0 12 8" fill="none" stroke="#444" stroke-width="1.4" stroke-linecap="round" stroke-linejoin="round"><path d="M1 1.5l5 5 5-5"/></svg><svg class="abs" style="left:43px;top:126.30000000000001px" width="19" height="17" viewBox="0 0 19 17" fill="none" stroke="#444" stroke-width="1.3" stroke-linejoin="round"><path d="M1.5 3.5a1.5 1.5 0 0 1 1.5-1.5h3.5l1.5 1.8h8a1.5 1.5 0 0 1 1.5 1.5v8.7a1.5 1.5 0 0 1-1.5 1.5H3a1.5 1.5 0 0 1-1.5-1.5z"/><path d="M1.5 5.5h16"/></svg><div class="abs" style="left:70px;top:127.50000000000001px;font-size:13.7px;line-height:16px;color:#333;white-space:nowrap">Sevron HQ</div><div class="abs" style="left:144.55px;top:127.55000000000001px;width:14.5px;height:14.5px;border-radius:50%;background:#e2496b;color:#fff;font-size:9px;line-height:14.5px;text-align:center">1</div><div class="abs" style="left:166.25px;top:127.55000000000001px;width:14.5px;height:14.5px;border-radius:50%;background:#e07335;color:#fff;font-size:9px;line-height:14.5px;text-align:center">1</div><svg class="abs" style="left:189.3px;top:129.3px" width="12" height="10" viewBox="0 0 12 10" fill="none" stroke="#4fa88a" stroke-width="1.4" stroke-linecap="round" stroke-linejoin="round"><path d="M1.2 5.2l3 3L10.8 1.8"/></svg>
<svg class="abs" style="left:47px;top:161px" width="12" height="8" viewBox="0 0 12 8" fill="none" stroke="#444" stroke-width="1.4" stroke-linecap="round" stroke-linejoin="round"><path d="M1 1.5l5 5 5-5"/></svg><svg class="abs" style="left:70.6px;top:156.5px" width="19" height="17" viewBox="0 0 19 17" fill="none" stroke="#444" stroke-width="1.3" stroke-linejoin="round"><path d="M1.5 3.5a1.5 1.5 0 0 1 1.5-1.5h3.5l1.5 1.8h8a1.5 1.5 0 0 1 1.5 1.5v8.7a1.5 1.5 0 0 1-1.5 1.5H3a1.5 1.5 0 0 1-1.5-1.5z"/><path d="M1.5 5.5h16"/></svg><div class="abs" style="left:96px;top:157.7px;font-size:13.7px;line-height:16px;color:#333;white-space:nowrap">Lancashire</div><div class="abs" style="left:171.25px;top:157.75px;width:14.5px;height:14.5px;border-radius:50%;background:#e58a4c;color:#fff;font-size:9px;line-height:14.5px;text-align:center">1</div><svg class="abs" style="left:194px;top:159.5px" width="12" height="10" viewBox="0 0 12 10" fill="none" stroke="#4fa88a" stroke-width="1.4" stroke-linecap="round" stroke-linejoin="round"><path d="M1.2 5.2l3 3L10.8 1.8"/></svg>
<svg class="abs" style="left:72.3px;top:186.7px" width="14" height="16" viewBox="0 0 14 16" fill="none" stroke="#444" stroke-width="1.4" stroke-linejoin="round"><path d="M1.5 1.2h11v13.6L7 11 1.5 14.8z"/></svg><div class="abs" style="left:96px;top:187.39999999999998px;font-size:13.7px;line-height:16px;color:#333;white-space:nowrap">South Ribble</div><div class="abs" style="left:183.75px;top:187.45px;width:14.5px;height:14.5px;border-radius:50%;background:#e58a4c;color:#fff;font-size:9px;line-height:14.5px;text-align:center">1</div><svg class="abs" style="left:206.8px;top:189.2px" width="12" height="10" viewBox="0 0 12 10" fill="none" stroke="#4fa88a" stroke-width="1.4" stroke-linecap="round" stroke-linejoin="round"><path d="M1.2 5.2l3 3L10.8 1.8"/></svg>
<svg class="abs" style="left:75.4px;top:219px" width="8" height="12" viewBox="0 0 8 12" fill="none" stroke="#444" stroke-width="1.4" stroke-linecap="round" stroke-linejoin="round"><path d="M1.5 1l5 5-5 5"/></svg><svg class="abs" style="left:96.8px;top:216.5px" width="19" height="17" viewBox="0 0 19 17" fill="none" stroke="#444" stroke-width="1.3" stroke-linejoin="round"><path d="M1.5 3.5a1.5 1.5 0 0 1 1.5-1.5h3.5l1.5 1.8h8a1.5 1.5 0 0 1 1.5 1.5v8.7a1.5 1.5 0 0 1-1.5 1.5H3a1.5 1.5 0 0 1-1.5-1.5z"/><path d="M1.5 5.5h16"/></svg><div class="abs" style="left:123px;top:217.7px;font-size:13.7px;line-height:16px;color:#333;white-space:nowrap">Leyland</div><div class="abs" style="left:179.35px;top:217.75px;width:14.5px;height:14.5px;border-radius:50%;background:#e58a4c;color:#fff;font-size:9px;line-height:14.5px;text-align:center">1</div><svg class="abs" style="left:201.8px;top:219.5px" width="12" height="10" viewBox="0 0 12 10" fill="none" stroke="#4fa88a" stroke-width="1.4" stroke-linecap="round" stroke-linejoin="round"><path d="M1.2 5.2l3 3L10.8 1.8"/></svg>
<svg class="abs" style="left:99px;top:247px" width="14" height="16" viewBox="0 0 14 16" fill="none" stroke="#444" stroke-width="1.4" stroke-linejoin="round"><path d="M1.5 1.2h11v13.6L7 11 1.5 14.8z"/></svg><div class="abs" style="left:123px;top:247.7px;font-size:13.7px;line-height:16px;color:#333;white-space:nowrap">Logistics W...</div><div class="abs" style="left:212.15px;top:247.75px;width:14.5px;height:14.5px;border-radius:50%;background:#e2496b;color:#fff;font-size:9px;line-height:14.5px;text-align:center">1</div><div class="abs" style="left:233.95px;top:247.75px;width:14.5px;height:14.5px;border-radius:50%;background:#e07335;color:#fff;font-size:9px;line-height:14.5px;text-align:center">1</div><svg class="abs" style="left:256.5px;top:249.5px" width="12" height="10" viewBox="0 0 12 10" fill="none" stroke="#4fa88a" stroke-width="1.4" stroke-linecap="round" stroke-linejoin="round"><path d="M1.2 5.2l3 3L10.8 1.8"/></svg>
<div class="abs" style="left:273px;top:123.4px;width:6.3px;height:143.4px;border-radius:3px;background:#f5f5f5"></div>
<div class="abs" style="left:273px;top:123.4px;width:6.3px;height:109px;border-radius:3px;background:#dcdee2"></div>
<div class="abs" style="left:19.5px;top:275.8px;width:237px;height:5.5px;border-radius:3px;background:#f3f3f3"></div>
<div class="abs" style="left:19.5px;top:275.8px;width:178px;height:5.5px;border-radius:3px;background:#d6d8dc"></div>
</div>
<div class="card" style="left:256px;top:788px;width:300px;height:302px">
<div class="ttl" style="top:19px">INCIDENT SUMMARY</div><div class="div" style="top:46px"></div>
<svg class="abs" style="left:0;top:0" width="300" height="302"><path d="M104.7 83.7L37.25 200L104.7 200z" fill="#5ab99c"/><path d="M104.7 83.7L172.15 200L104.7 200z" fill="#41907b"/><line x1="89.90" y1="107.5" x2="119.50" y2="107.5" stroke="#e9f6f1" stroke-width="1.6"/><line x1="75.80" y1="131.8" x2="133.60" y2="131.8" stroke="#e9f6f1" stroke-width="1.6"/><line x1="104.7" y1="83.7" x2="104.7" y2="200" stroke="#e9f6f1" stroke-width="1.6"/><line x1="109" y1="92.8" x2="195.7" y2="92.8" stroke="#eeeeee" stroke-width="1"/><line x1="126" y1="119" x2="195.7" y2="119" stroke="#eeeeee" stroke-width="1"/><line x1="141.5" y1="143.5" x2="195.7" y2="143.5" stroke="#eeeeee" stroke-width="1"/></svg>
<div class="abs" style="left:200.4px;top:87.5px;font-size:10.4px;line-height:14px;color:#333;white-space:nowrap">Fatalities, 1</div>
<div class="abs" style="left:200.4px;top:113px;font-size:10.4px;line-height:14px;color:#333;white-space:nowrap">RIDDOR, 23513</div>
<div class="abs" style="left:200.4px;top:138px;font-size:10.4px;line-height:14px;color:#333;white-space:nowrap">Lost Time,</div>
</div>
<div class="card" style="left:570px;top:788px;width:300px;height:302px">
<div class="ttl" style="top:19px">12 MONTH ROLLING RATES - DIRECT</div><div class="div" style="top:46px"></div>
<svg class="abs" style="left:186px;top:63px" width="17" height="17" viewBox="0 0 17 17" fill="none" stroke="#444" stroke-width="1.3" stroke-linecap="round" stroke-linejoin="round"><circle cx="7.5" cy="7.5" r="6"/><path d="M7.5 5v5M5 7.5h5M12 12l3 3"/></svg>
<svg class="abs" style="left:213px;top:63px" width="17" height="17" viewBox="0 0 17 17" fill="none" stroke="#444" stroke-width="1.3" stroke-linecap="round" stroke-linejoin="round"><circle cx="7.5" cy="7.5" r="6"/><path d="M5 7.5h5M12 12l3 3"/></svg>
<svg class="abs" style="left:240px;top:63px" width="16" height="17" viewBox="0 0 16 17" fill="none" stroke="#444" stroke-width="1.3" stroke-linecap="round" stroke-linejoin="round"><path d="M2.2 5.5A6.3 6.3 0 1 1 1.8 9.5"/><path d="M2 1.8v3.9h3.9"/></svg>
<svg class="abs" style="left:268px;top:63px" width="14" height="16" viewBox="0 0 14 16" fill="none" stroke="#444" stroke-width="1.3" stroke-linecap="round" stroke-linejoin="round"><path d="M4 1.2h6M5 1.2v5.3L2.2 9.6h9.6L9 6.5V1.2M7 9.6v5.6"/></svg>
<svg class="abs" style="left:0;top:0" width="300" height="302"><rect x="41.2" y="114.3" width="242" height="19.4" fill="#f3f3f3"/><line x1="41.2" y1="93.6" x2="285.3" y2="93.6" stroke="#eeeeee" stroke-width="1" stroke-dasharray="2 1"/><line x1="41.2" y1="114.3" x2="285.3" y2="114.3" stroke="#e2e2e2" stroke-width="1" stroke-dasharray="1.5 1.5"/><line x1="41.2" y1="133.4" x2="285.3" y2="133.4" stroke="#eeeeee" stroke-width="1" stroke-dasharray="2 1"/><path d="M241.8 149L255.1 137.8" stroke="#5a4fcf" stroke-width="2.2" fill="none"/><circle cx="255.1" cy="137.8" r="3.6" fill="#fff" stroke="#5a4fcf" stroke-width="2"/></svg>
<div class="abs" style="left:5px;top:89.7px;width:31px;text-align:right;font-size:11px;line-height:14px;color:#333">30k</div>
<div class="abs" style="left:5px;top:109px;width:31px;text-align:right;font-size:11px;line-height:14px;color:#333">24k</div>
<div class="abs" style="left:5px;top:127.19999999999999px;width:31px;text-align:right;font-size:11px;line-height:14px;color:#333">18k</div>
</div>
<div class="card" style="left:884px;top:788px;width:299px;height:302px">
<div class="ttl" style="top:19px">PERFORMANCE SUMMARY</div><div class="div" style="top:46px"></div>
<div class="abs" style="left:100px;top:95px;font-size:12.5px;line-height:15px;color:#333;white-space:nowrap">Total: 0</div>
<div class="abs" style="left:151.8px;top:95px;font-size:12.5px;line-height:15px;color:#333;white-space:nowrap">Target: 0</div>
<div class="abs" style="left:133px;top:125px;font-size:11px;line-height:14px;color:#777;white-space:nowrap">100%</div>
<svg class="abs" style="left:0;top:0" width="299" height="302"><circle cx="145.4" cy="254.8" r="105" fill="none" stroke="#f2c443" stroke-width="20"/><path d="M145.4 159.8L145.4 139.8A115 115 0 0 1 260.4 254.8L240.39999999999998 254.8A95 95 0 0 0 145.4 159.8z" fill="#52b49b"/><path d="M40.40 254.80A105 105 0 0 1 106.07 157.45" stroke="#e2496b" stroke-width="20" fill="none"/><line x1="112.07" y1="145.78" x2="113.24" y2="149.61" stroke="#6a6a4a" stroke-width="1.1"/><line x1="128.55" y1="142.05" x2="129.14" y2="146.01" stroke="#6a6a4a" stroke-width="1.1"/><line x1="162.25" y1="142.05" x2="161.66" y2="146.01" stroke="#6a6a4a" stroke-width="1.1"/><line x1="178.73" y1="145.78" x2="177.56" y2="149.61" stroke="#6a6a4a" stroke-width="1.1"/><line x1="145.4" y1="139.8" x2="145.4" y2="159.8" stroke="#5a6a50" stroke-width="1"/></svg>
</div></body></html>
